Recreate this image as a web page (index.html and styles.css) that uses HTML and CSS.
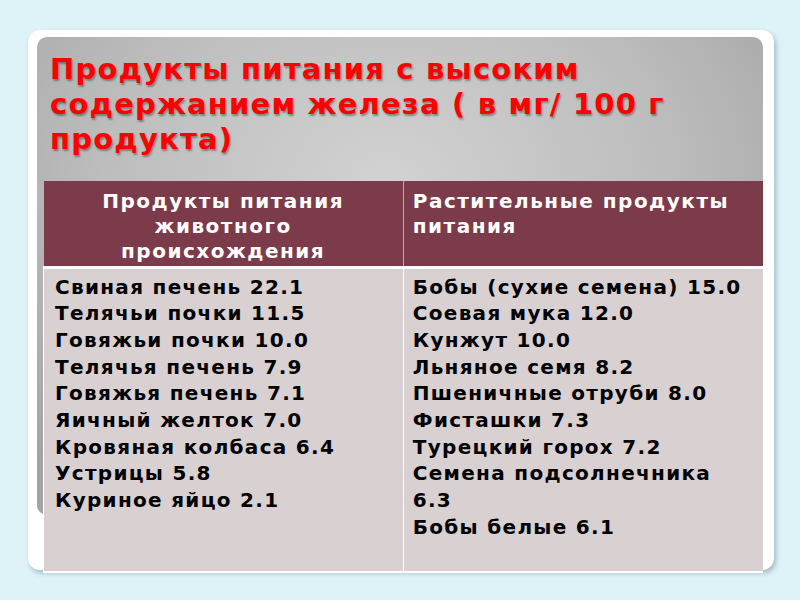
FILE: index.html
```html
<!DOCTYPE html>
<html lang="ru">
<head>
<meta charset="utf-8">
<title>Железо</title>
<link rel="stylesheet" href="styles.css">
</head>
<body>
<div class="slide">
  <div class="panel">
    <h1 class="title">Продукты питания с высоким содержанием железа ( в мг/ 100 г продукта)</h1>
    <table class="iron">
      <thead>
        <tr>
          <th class="c-left">Продукты питания животного происхождения</th>
          <th class="c-right">Растительные продукты питания</th>
        </tr>
      </thead>
      <tbody>
        <tr>
          <td class="c-left">Свиная печень 22.1<br>Телячьи почки 11.5<br>Говяжьи почки 10.0<br>Телячья печень 7.9<br>Говяжья печень 7.1<br>Яичный желток 7.0<br>Кровяная колбаса 6.4<br>Устрицы 5.8<br>Куриное яйцо 2.1</td>
          <td class="c-right">Бобы (сухие семена) 15.0<br>Соевая мука 12.0<br>Кунжут 10.0<br>Льняное семя 8.2<br>Пшеничные отруби 8.0<br>Фисташки 7.3<br>Турецкий горох 7.2<br>Семена подсолнечника 6.3<br>Бобы белые 6.1</td>
        </tr>
      </tbody>
    </table>
  </div>
</div>
</body>
</html>
```
FILE: styles.css
```css
html, body {
  margin: 0;
  padding: 0;
}
body {
  background: #ddf3f8;
  width: 800px;
  height: 600px;
  overflow: hidden;
  font-family: "DejaVu Sans", Verdana, sans-serif;
}
.slide {
  margin: 30px 0 0 28px;
  width: 746px;
  height: 540px;
  box-sizing: border-box;
  background: #ffffff;
  border-radius: 12px;
  padding: 7px 11px 0 9px;
  box-shadow: 2px 3px 5px rgba(90, 120, 130, 0.45);
}
.panel {
  height: 478px;
  border-radius: 10px;
  background: radial-gradient(ellipse 70% 80% at 48% 30%, #d2d2d2 0%, #bdbdbd 55%, #a3a3a3 100%);
  padding: 15px 0 0 6px;
  box-sizing: border-box;
}
.title {
  margin: 0 0 0 7px;
  font-size: 29px;
  line-height: 35px;
  letter-spacing: 1.2px;
  font-weight: bold;
  color: #ff0000;
  text-shadow: 1px 2px 2px rgba(0, 0, 0, 0.35);
  height: 129px;
}
.iron {
  width: 720px;
  border-collapse: collapse;
  table-layout: fixed;
}
.iron th {
  background: #7b3b4a;
  color: #ffffff;
  font-size: 20px;
  line-height: 25px;
  letter-spacing: 1.5px;
  font-weight: bold;
  height: 86px;
  box-sizing: border-box;
  vertical-align: top;
  padding: 8px 8px 0 9px;
  border-bottom: 3px solid #ffffff;
}
.iron th.c-left {
  text-align: center;
  border-right: 1px solid #c9a3ab;
  padding-left: 30px;
  padding-right: 30px;
}
.iron th.c-right {
  text-align: left;
}
.iron td {
  background: #d9d0d1;
  color: #000000;
  font-size: 20px;
  line-height: 26.7px;
  letter-spacing: 1.3px;
  font-weight: bold;
  vertical-align: top;
  padding: 5px 6px 0 9px;
  height: 305px;
  box-sizing: border-box;
  border-left: 1px solid #ffffff;
  border-bottom: 2px solid #ffffff;
}
.iron td.c-left {
  padding-left: 11px;
}
```
